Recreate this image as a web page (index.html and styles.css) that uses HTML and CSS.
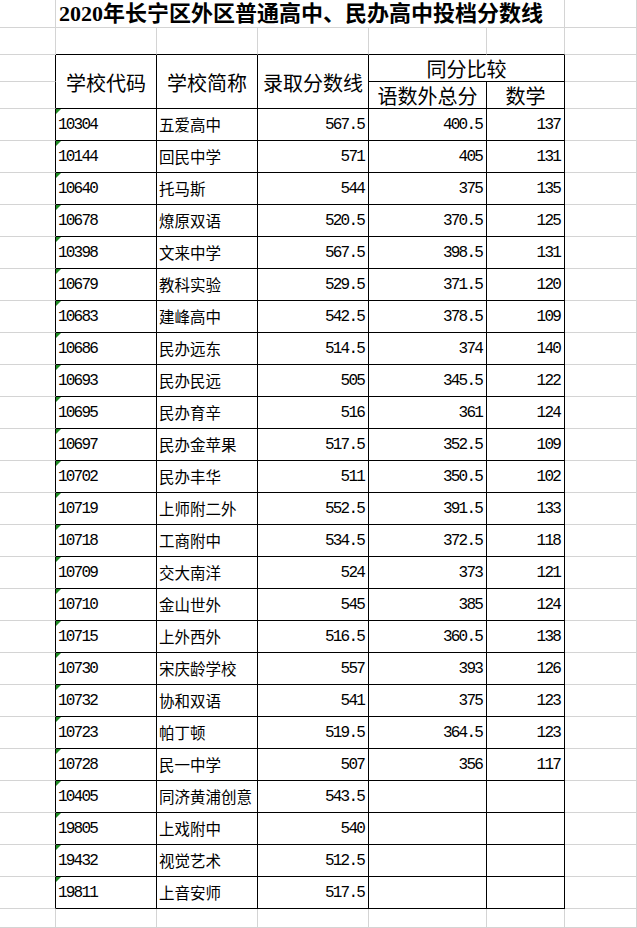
FILE: index.html
```html
<!DOCTYPE html>
<html lang="zh-CN">
<head>
<meta charset="utf-8">
<title>2020年长宁区外区普通高中、民办高中投档分数线</title>
<link rel="stylesheet" href="styles.css">
</head>
<body>
<div class="sheet">
  <div class="c"></div><div class="c title">2020年长宁区外区普通高中、民办高中投档分数线</div><div class="c"></div>
  <div class="c"></div><div class="c bb"></div><div class="c bb"></div><div class="c bb"></div><div class="c bb"></div><div class="c bb"></div><div class="c"></div>
  <div class="c br"></div><div class="c br bb hdr">学校代码</div><div class="c br bb hdr">学校简称</div><div class="c br bb hdr">录取分数线</div><div class="c br bb grp">同分比较</div><div class="c"></div>
  <div class="c br"></div><div class="c br bb sub">语数外总分</div><div class="c br bb sub">数学</div><div class="c"></div>

  <div class="c br"></div><div class="c br bb code">10304</div><div class="c br bb name">五爱高中</div><div class="c br bb num">567.5</div><div class="c br bb num">400.5</div><div class="c br bb num">137</div><div class="c"></div>
  <div class="c br"></div><div class="c br bb code">10144</div><div class="c br bb name">回民中学</div><div class="c br bb num">571</div><div class="c br bb num">405</div><div class="c br bb num">131</div><div class="c"></div>
  <div class="c br"></div><div class="c br bb code">10640</div><div class="c br bb name">托马斯</div><div class="c br bb num">544</div><div class="c br bb num">375</div><div class="c br bb num">135</div><div class="c"></div>
  <div class="c br"></div><div class="c br bb code">10678</div><div class="c br bb name">燎原双语</div><div class="c br bb num">520.5</div><div class="c br bb num">370.5</div><div class="c br bb num">125</div><div class="c"></div>
  <div class="c br"></div><div class="c br bb code">10398</div><div class="c br bb name">文来中学</div><div class="c br bb num">567.5</div><div class="c br bb num">398.5</div><div class="c br bb num">131</div><div class="c"></div>
  <div class="c br"></div><div class="c br bb code">10679</div><div class="c br bb name">教科实验</div><div class="c br bb num">529.5</div><div class="c br bb num">371.5</div><div class="c br bb num">120</div><div class="c"></div>
  <div class="c br"></div><div class="c br bb code">10683</div><div class="c br bb name">建峰高中</div><div class="c br bb num">542.5</div><div class="c br bb num">378.5</div><div class="c br bb num">109</div><div class="c"></div>
  <div class="c br"></div><div class="c br bb code">10686</div><div class="c br bb name">民办远东</div><div class="c br bb num">514.5</div><div class="c br bb num">374</div><div class="c br bb num">140</div><div class="c"></div>
  <div class="c br"></div><div class="c br bb code">10693</div><div class="c br bb name">民办民远</div><div class="c br bb num">505</div><div class="c br bb num">345.5</div><div class="c br bb num">122</div><div class="c"></div>
  <div class="c br"></div><div class="c br bb code">10695</div><div class="c br bb name">民办育辛</div><div class="c br bb num">516</div><div class="c br bb num">361</div><div class="c br bb num">124</div><div class="c"></div>
  <div class="c br"></div><div class="c br bb code">10697</div><div class="c br bb name">民办金苹果</div><div class="c br bb num">517.5</div><div class="c br bb num">352.5</div><div class="c br bb num">109</div><div class="c"></div>
  <div class="c br"></div><div class="c br bb code">10702</div><div class="c br bb name">民办丰华</div><div class="c br bb num">511</div><div class="c br bb num">350.5</div><div class="c br bb num">102</div><div class="c"></div>
  <div class="c br"></div><div class="c br bb code">10719</div><div class="c br bb name">上师附二外</div><div class="c br bb num">552.5</div><div class="c br bb num">391.5</div><div class="c br bb num">133</div><div class="c"></div>
  <div class="c br"></div><div class="c br bb code">10718</div><div class="c br bb name">工商附中</div><div class="c br bb num">534.5</div><div class="c br bb num">372.5</div><div class="c br bb num">118</div><div class="c"></div>
  <div class="c br"></div><div class="c br bb code">10709</div><div class="c br bb name">交大南洋</div><div class="c br bb num">524</div><div class="c br bb num">373</div><div class="c br bb num">121</div><div class="c"></div>
  <div class="c br"></div><div class="c br bb code">10710</div><div class="c br bb name">金山世外</div><div class="c br bb num">545</div><div class="c br bb num">385</div><div class="c br bb num">124</div><div class="c"></div>
  <div class="c br"></div><div class="c br bb code">10715</div><div class="c br bb name">上外西外</div><div class="c br bb num">516.5</div><div class="c br bb num">360.5</div><div class="c br bb num">138</div><div class="c"></div>
  <div class="c br"></div><div class="c br bb code">10730</div><div class="c br bb name">宋庆龄学校</div><div class="c br bb num">557</div><div class="c br bb num">393</div><div class="c br bb num">126</div><div class="c"></div>
  <div class="c br"></div><div class="c br bb code">10732</div><div class="c br bb name">协和双语</div><div class="c br bb num">541</div><div class="c br bb num">375</div><div class="c br bb num">123</div><div class="c"></div>
  <div class="c br"></div><div class="c br bb code">10723</div><div class="c br bb name">帕丁顿</div><div class="c br bb num">519.5</div><div class="c br bb num">364.5</div><div class="c br bb num">123</div><div class="c"></div>
  <div class="c br"></div><div class="c br bb code">10728</div><div class="c br bb name">民一中学</div><div class="c br bb num">507</div><div class="c br bb num">356</div><div class="c br bb num">117</div><div class="c"></div>
  <div class="c br"></div><div class="c br bb code">10405</div><div class="c br bb name">同济黄浦创意</div><div class="c br bb num">543.5</div><div class="c br bb num"></div><div class="c br bb num"></div><div class="c"></div>
  <div class="c br"></div><div class="c br bb code">19805</div><div class="c br bb name">上戏附中</div><div class="c br bb num">540</div><div class="c br bb num"></div><div class="c br bb num"></div><div class="c"></div>
  <div class="c br"></div><div class="c br bb code">19432</div><div class="c br bb name">视觉艺术</div><div class="c br bb num">512.5</div><div class="c br bb num"></div><div class="c br bb num"></div><div class="c"></div>
  <div class="c br"></div><div class="c br bb code">19811</div><div class="c br bb name">上音安师</div><div class="c br bb num">517.5</div><div class="c br bb num"></div><div class="c br bb num"></div><div class="c"></div>

  <div class="c"></div><div class="c"></div><div class="c"></div><div class="c"></div><div class="c"></div><div class="c"></div><div class="c"></div>
</div>
</body>
</html>
```
FILE: styles.css
```css
html, body {
  margin: 0;
  padding: 0;
  background: #ffffff;
}

.sheet {
  display: grid;
  grid-template-columns: 56px 101px 101px 111px 118px 78px 72px;
  grid-template-rows: 28px 27px 27px 27px repeat(25, 32px) 19px;
  width: 637px;
  font-family: "Noto Sans CJK SC", sans-serif;
  color: #000000;
}

.c {
  box-sizing: border-box;
  border-right: 1px solid #d4d4d4;
  border-bottom: 1px solid #d4d4d4;
  display: flex;
  align-items: center;
  white-space: nowrap;
  line-height: 1.1;
  position: relative;
}

.br { border-right-color: #000000; }
.bb { border-bottom-color: #000000; }

.title {
  grid-column: span 5;
  font-family: "Liberation Serif", "Noto Sans CJK SC", serif;
  font-weight: bold;
  font-size: 22px;
  padding-left: 3px;
  padding-top: 1px;
}

.hdr {
  grid-row: span 2;
  justify-content: center;
  font-size: 20px;
  padding-top: 3px;
}

.grp {
  grid-column: span 2;
  justify-content: center;
  font-size: 20px;
  padding-top: 2px;
}

.sub {
  justify-content: center;
  font-size: 20px;
  padding-top: 1px;
}

.code {
  font-family: "Liberation Mono", monospace;
  font-size: 16px;
  letter-spacing: -1.8px;
  padding-left: 2px;
  padding-top: 2px;
}

.code::before {
  content: "";
  position: absolute;
  top: 0;
  left: 0;
  border-top: 5px solid #1f8b24;
  border-right: 5px solid transparent;
}

.name {
  font-size: 15.5px;
  padding-left: 2px;
  padding-top: 1px;
}

.num {
  justify-content: flex-end;
  font-family: "Liberation Mono", monospace;
  font-size: 16px;
  letter-spacing: -1.8px;
  padding-right: 4px;
  padding-top: 2px;
}
```
